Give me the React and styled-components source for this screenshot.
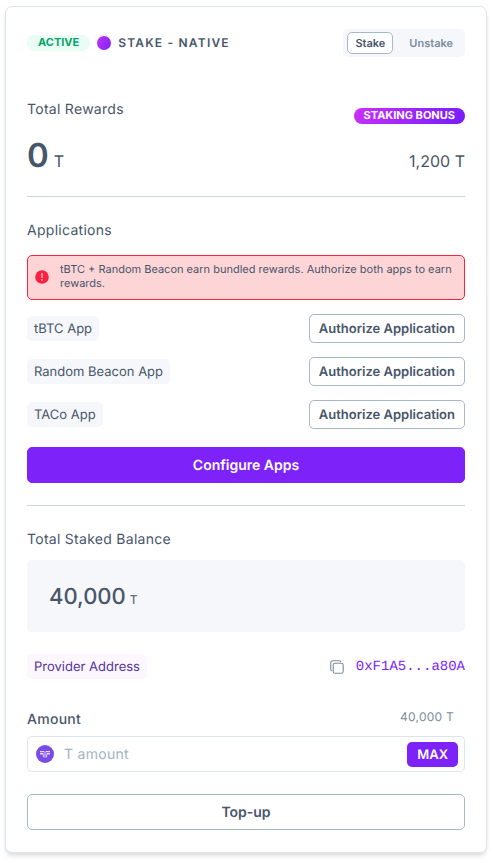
import React, { useState } from "react";
import styled, { createGlobalStyle, css } from "styled-components";

const slate = "#48566a";
const purple = "#7d22f8";

const GlobalStyle = createGlobalStyle`
  *, *::before, *::after { box-sizing: border-box; }
  body {
    margin: 0;
    background: #fff;
    color: ${slate};
    font-family: Inter, "Liberation Sans", sans-serif;
    font-size: 14px;
    line-height: 22px;
    text-rendering: geometricPrecision;
  }
  button, input { font: inherit; color: inherit; text-rendering: inherit; }
  button { cursor: pointer; }
  h2, p, dl, dd, ul { margin: 0; padding: 0; }
`;

const Card = styled.main`
  margin: 6px 6px 9px 5px;
  padding: 22px 21px;
  border: 1px solid #dce5ee;
  border-radius: 7px;
  background: #fff;
  box-shadow: 0 4px 5px -1px rgba(0, 0, 0, 0.1), 0 2px 4px -1px rgba(0, 0, 0, 0.06);
`;

const Row = styled.div`
  display: flex;
  align-items: ${(p) => p.$align || "center"};
  justify-content: space-between;
`;

const Header = styled(Row).attrs({ as: "header" })`
  margin-bottom: 42px;
`;

const Title = styled.h1`
  display: flex;
  align-items: center;
  gap: 7px;
  margin: 0;
  font-size: 12px;
  font-weight: 600;
  letter-spacing: 0.1em;
  line-height: 16px;
`;

const Pill = styled.span`
  padding: 0 10px 2px;
  border-radius: 8px;
  font-size: 11px;
  font-weight: 700;
  line-height: 14px;
  letter-spacing: 0;
  ${(p) =>
    p.$bonus
      ? css`
          margin-top: 9px;
          color: #fff;
          background: linear-gradient(120deg, #cb30fb, #741dfa);
        `
      : css`
          padding: 0 11px 2px;
          color: #07a36b;
          background: #e9fdf4;
        `}
`;

const Dot = styled.span`
  width: 14px;
  height: 14px;
  border-radius: 50%;
  background: linear-gradient(120deg, #bf35f6, #7d22f8);
`;

const Toggle = styled.div`
  display: flex;
  padding: 3px 4px;
  border-radius: 5px;
  background: #f5f7fb;
`;

const ToggleButton = styled.button`
  height: 22px;
  padding: 0 7px;
  border: 1px solid ${(p) => (p.$active ? "#a8b8c8" : "transparent")};
  border-radius: 5px;
  background: ${(p) => (p.$active ? "#fff" : "transparent")};
  color: ${(p) => (p.$active ? slate : "#7c8da1")};
  font-size: 11px;
  font-weight: 600;
  line-height: 16px;
  & + & { margin-left: 8px; }
`;

const SectionTitle = styled.h2`
  font-size: 14px;
  font-weight: 400;
  letter-spacing: 0.02em;
`;

const Rewards = styled(Row)`
  margin: 9px 0 19px;
`;

const Amount = styled.p`
  display: flex;
  align-items: baseline;
  gap: 5px;
  font-size: 33px;
  font-weight: 600;
  line-height: 44px;
`;

const Unit = styled.span`
  font-size: ${(p) => (p.$small ? "12px" : "16px")};
  font-weight: 400;
  line-height: 1;
`;

const Bonus = styled.p`
  padding-top: 12px;
  font-size: 16px;
`;

const Divider = styled.hr`
  height: 1px;
  margin: 0 0 23px;
  border: 0;
  background: #cbd5e1;
`;

const Alert = styled.div`
  display: flex;
  align-items: center;
  gap: 11px;
  min-height: 45px;
  margin: 13px 0 14px;
  padding: 6px 10px 8px 7px;
  border: 1px solid #f9213f;
  border-radius: 5px;
  background: #fed5d7;
  font-size: 11px;
  line-height: 14px;
  svg { flex: none; }
  p { padding-bottom: 1px; }
`;

const AppList = styled.ul`
  display: grid;
  gap: 14px;
  margin-bottom: 18px;
  list-style: none;
`;

const Tag = styled.span`
  padding: 1px 7px 0;
  border-radius: 5px;
  background: ${(p) => (p.$brand ? "#fcf7ff" : "#f5f7fb")};
  color: ${(p) => (p.$brand ? "#56349c" : slate)};
  font-size: 13px;
  line-height: 24px;
`;

const Button = styled.button`
  border: 1px solid #a8b8c8;
  border-radius: 5px;
  background: #fff;
  font-weight: 600;
  ${(p) =>
    p.$small
      ? css`
          height: 29px;
          padding: 0 9px;
          font-size: 13px;
        `
      : css`
          display: block;
          width: 100%;
          height: 36px;
          padding: 2px 0 0;
          font-size: 14px;
        `}
  ${(p) =>
    p.$primary &&
    css`
      border-color: ${purple};
      background: ${purple};
      color: #fff;
    `}
`;

const Configure = styled(Button)`
  margin-bottom: 22px;
`;

const Balance = styled(Amount)`
  gap: 4px;
  margin: 9px 0 22px;
  padding: 2px 22px 0;
  border-radius: 5px;
  background: #f5f7fb;
  font-size: 22px;
  font-weight: 500;
  line-height: 70px;
`;

const Address = styled.div`
  display: flex;
  align-items: center;
  gap: 12px;
`;

const AddressLink = styled.a`
  color: ${purple};
  font-family: "Liberation Mono", monospace;
  font-size: 14px;
  text-decoration: none;
`;

const IconButton = styled.button`
  display: flex;
  padding: 0;
  border: 0;
  background: none;
  color: #7c8da1;
`;

const FieldHead = styled(Row)`
  margin: 28px 0 4px;
  padding-right: 11px;
  line-height: 25px;
`;

const FieldLabel = styled.label`
  font-weight: 500;
  letter-spacing: 0.02em;
`;

const Available = styled.span`
  color: #7c8da1;
  font-size: 12px;
  line-height: 20px;
  letter-spacing: 0.02em;
`;

const Field = styled.div`
  display: flex;
  align-items: center;
  gap: 10px;
  height: 36px;
  margin-bottom: 22px;
  padding: 0 6px 0 8px;
  border: 1px solid #dce5ee;
  border-radius: 5px;
  svg { flex: none; }
`;

const Input = styled.input`
  flex: 1;
  min-width: 0;
  padding: 2px 0 0;
  border: 0;
  outline: 0;
  background: transparent;
  letter-spacing: 0.02em;
  &::placeholder { color: #a2b3c4; opacity: 1; }
`;

const MaxButton = styled.button`
  height: 25px;
  padding: 2px 10px 0;
  border: 0;
  border-radius: 5px;
  background: ${purple};
  color: #fff;
  font-size: 13px;
  font-weight: 600;
`;

const AlertIcon = () => (
  <svg width="14" height="14" viewBox="0 0 14 14" aria-hidden="true">
    <circle cx="7" cy="7" r="6.8" fill="#f9213f" />
    <path d="M7 3.5v4" stroke="#fed5d7" strokeWidth="1.2" strokeLinecap="round" />
    <circle cx="7" cy="9.9" r="0.8" fill="#fed5d7" />
  </svg>
);

const CopyIcon = () => (
  <svg width="14" height="14" viewBox="0 0 14 14" fill="none" stroke="currentColor" aria-hidden="true">
    <rect x="3.2" y="3.2" width="10" height="10" rx="1.8" strokeWidth="1.1" />
    <path d="M2 10.8C1.1 10.8.7 10 .7 9V3C.7 1.5 1.6.7 3 .7h6c1.1 0 1.8.4 1.8 1.4" strokeWidth="1.1" />
  </svg>
);

const TokenIcon = () => (
  <svg width="18" height="18" viewBox="0 0 18 18" aria-hidden="true">
    <circle cx="9" cy="9" r="9" fill="#7b4be5" />
    <g fill="#e4d9fb">
      <path d="M4 6h4.4v1.2H4zM9.6 6H14v1.2H9.6z" />
      <path d="M4 7.9h3.4v1.6H4zM10.6 7.9H14v1.6h-3.4z" />
      <path d="M8.5 7.2h1v5.6h-1zM6.8 9.2h1v3h-1zM10.2 9.2h1v3h-1z" />
    </g>
  </svg>
);

const apps = ["tBTC App", "Random Beacon App", "TACo App"];

export default function App() {
  const [mode, setMode] = useState("Stake");
  const [amount, setAmount] = useState("");

  return (
    <>
      <GlobalStyle />
      <Card>
        <Header>
          <Title>
            <Pill>ACTIVE</Pill>
            <Dot />
            STAKE - NATIVE
          </Title>
          <Toggle>
            {["Stake", "Unstake"].map((m) => (
              <ToggleButton
                key={m}
                type="button"
                aria-pressed={mode === m}
                $active={mode === m}
                onClick={() => setMode(m)}
              >
                {m}
              </ToggleButton>
            ))}
          </Toggle>
        </Header>

        <Row $align="flex-start">
          <SectionTitle>Total Rewards</SectionTitle>
          <Pill $bonus>STAKING BONUS</Pill>
        </Row>
        <Rewards>
          <Amount>
            0<Unit>T</Unit>
          </Amount>
          <Bonus>1,200 T</Bonus>
        </Rewards>
        <Divider />

        <SectionTitle>Applications</SectionTitle>
        <Alert role="alert">
          <AlertIcon />
          <p>tBTC + Random Beacon earn bundled rewards. Authorize both apps to earn rewards.</p>
        </Alert>
        <AppList>
          {apps.map((app) => (
            <Row as="li" key={app}>
              <Tag>{app}</Tag>
              <Button type="button" $small>Authorize Application</Button>
            </Row>
          ))}
        </AppList>
        <Configure type="button" $primary>Configure Apps</Configure>
        <Divider />

        <SectionTitle>Total Staked Balance</SectionTitle>
        <Balance>
          40,000<Unit $small>T</Unit>
        </Balance>
        <Row>
          <Tag $brand>Provider Address</Tag>
          <Address>
            <IconButton type="button" aria-label="Copy address">
              <CopyIcon />
            </IconButton>
            <AddressLink href="#address">0xF1A5...a80A</AddressLink>
          </Address>
        </Row>

        <FieldHead $align="flex-start">
          <FieldLabel htmlFor="amount">Amount</FieldLabel>
          <Available>40,000 T</Available>
        </FieldHead>
        <Field>
          <TokenIcon />
          <Input
            id="amount"
            placeholder="T amount"
            value={amount}
            onChange={(e) => setAmount(e.target.value)}
          />
          <MaxButton type="button" onClick={() => setAmount("40,000")}>MAX</MaxButton>
        </Field>
        <Button type="button">Top-up</Button>
      </Card>
    </>
  );
}
